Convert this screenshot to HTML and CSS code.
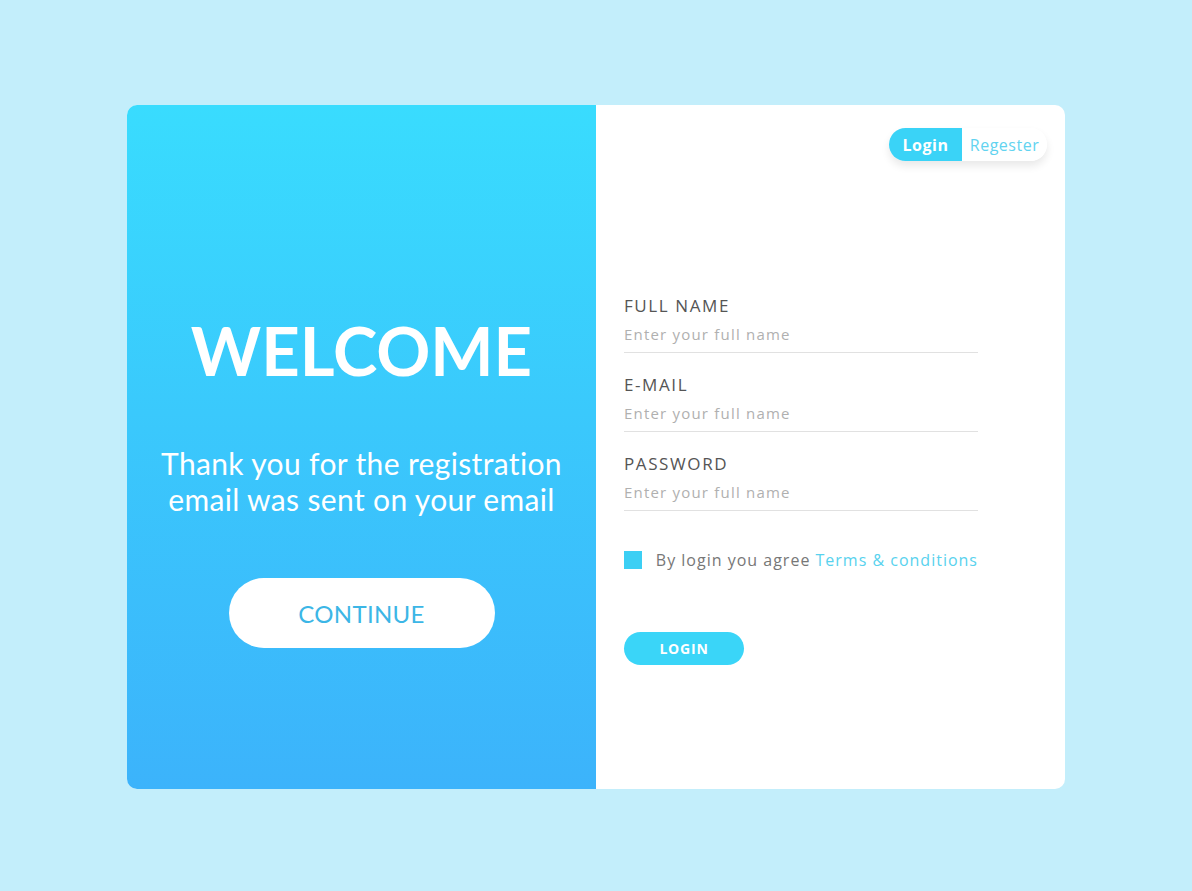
FILE: index.html
```html
<!DOCTYPE html>
<html lang="en">
<head>
<meta charset="utf-8">
<title>Welcome</title>
<link rel="stylesheet" href="styles.css">
</head>
<body>
<main class="stage">
  <section class="card">
    <div class="welcome">
      <h1 class="welcome-title">WELCOME</h1>
      <p class="welcome-text">Thank you for the registration<br>email was sent on your email</p>
      <button class="continue-btn">CONTINUE</button>
    </div>
    <div class="form-side">
      <div class="toggle-row">
        <div class="toggle">
          <span class="toggle-item active">Login</span>
          <span class="toggle-item">Regester</span>
        </div>
      </div>
      <form class="form">
        <div class="field">
          <div class="field-label">FULL NAME</div>
          <div class="field-input">Enter your full name</div>
        </div>
        <div class="field">
          <div class="field-label">E-MAIL</div>
          <div class="field-input">Enter your full name</div>
        </div>
        <div class="field">
          <div class="field-label">PASSWORD</div>
          <div class="field-input">Enter your full name</div>
        </div>
        <div class="agree">
          <span class="check"></span>
          <span class="agree-text">By login you agree <span class="terms">Terms &amp; conditions</span></span>
        </div>
        <button type="button" class="login-btn">LOGIN</button>
      </form>
    </div>
  </section>
</main>
</body>
</html>
```

FILE: styles.css
```css
* { box-sizing: border-box; }
html, body { margin: 0; padding: 0; }
body {
  background: #c3eefb;
  width: 1192px;
  height: 891px;
  overflow: hidden;
  font-family: "Open Sans", "Noto Sans", sans-serif;
}
.stage {
  display: flex;
  justify-content: center;
  padding-top: 105px;
}
.card {
  width: 938px;
  height: 684px;
  display: flex;
  border-radius: 10px;
  overflow: hidden;
  background: #fff;
}
.welcome {
  width: 469px;
  background: linear-gradient(180deg, #39dcfe 0%, #3ac9fc 45%, #3cb3fb 100%);
  display: flex;
  flex-direction: column;
  align-items: center;
  padding-top: 211px;
  color: #fff;
  font-family: "Lato", sans-serif;
}
.welcome-title {
  margin: 0;
  font-size: 67px;
  line-height: 68px;
  font-weight: 700;
  letter-spacing: 0;
}
.welcome-text {
  margin: 61px 0 0;
  font-size: 30px;
  line-height: 36px;
  text-align: center;
  font-weight: 400;
  letter-spacing: 0.35px;
}
.continue-btn {
  margin-top: 61px;
  width: 266px;
  height: 70px;
  border: none;
  border-radius: 35px;
  background: #fff;
  color: #3cb6e6;
  font-family: "Lato", sans-serif;
  font-size: 24px;
  letter-spacing: 0.3px;
}
.form-side {
  width: 469px;
  display: flex;
  flex-direction: column;
  padding: 23px 18px 0 28px;
}
.toggle-row {
  display: flex;
  justify-content: flex-end;
}
.toggle {
  display: flex;
  height: 33px;
  border-radius: 17px;
  overflow: hidden;
  box-shadow: 0 5px 9px rgba(0, 0, 0, 0.09);
}
.toggle-item {
  display: flex;
  align-items: center;
  justify-content: center;
  font-size: 16px;
  letter-spacing: 0.5px;
  color: #62d3f0;
  width: 85px;
  background: #fff;
}
.toggle-item.active {
  width: 73px;
  background: #3ad3f7;
  color: #fff;
  font-weight: 700;
}
.form {
  display: flex;
  flex-direction: column;
  margin-top: 135px;
  width: 354px;
}
.field {
  border-bottom: 1px solid #e1e1e1;
  padding-bottom: 8px;
  margin-bottom: 22px;
}
.field-label {
  font-size: 17px;
  line-height: 20px;
  color: #555;
  letter-spacing: 1.6px;
}
.field-input {
  margin-top: 8px;
  font-size: 15px;
  line-height: 20px;
  color: #b0b0b0;
  letter-spacing: 1.2px;
}
.agree {
  display: flex;
  align-items: center;
  margin-top: 18px;
  height: 18px;
}
.check {
  width: 18px;
  height: 18px;
  background: #3ccff4;
  margin-right: 14px;
}
.agree-text {
  font-size: 16px;
  color: #777;
  letter-spacing: 1px;
  white-space: nowrap;
}
.terms { color: #58d2ee; }
.login-btn {
  margin-top: 63px;
  width: 120px;
  height: 33px;
  border: none;
  border-radius: 17px;
  background: #3ad5f8;
  color: #fff;
  font-family: "Open Sans", sans-serif;
  font-size: 14px;
  font-weight: 700;
  letter-spacing: 0.8px;
}
```
